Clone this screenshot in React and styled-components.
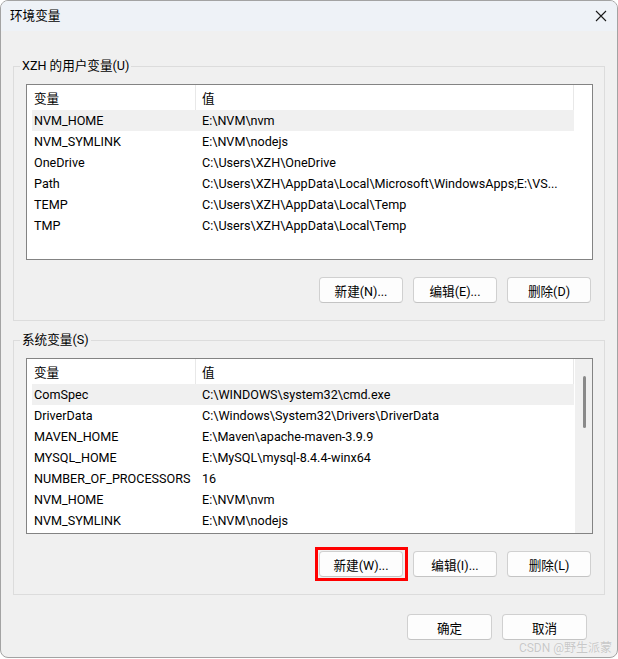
import React from "react";
import styled, { createGlobalStyle } from "styled-components";

const FONT = `Roboto, "Noto Sans CJK SC", sans-serif`;

const Global = createGlobalStyle`
  html, body { margin: 0; padding: 0; background: #ffffff; }
  body { font-family: ${FONT}; font-size: 12.6px; color: #000; }
  * { box-sizing: border-box; }
`;

const Window = styled.div`
  position: relative;
  width: 618px;
  height: 658px;
  border: 1px solid #a3a3a3;
  border-radius: 8px;
  background: #f0f0f0;
  overflow: hidden;
  display: flex;
  flex-direction: column;
`;

const TitleBar = styled.div`
  height: 30px;
  flex: none;
  background: #eef2f7;
  display: flex;
  align-items: center;
  justify-content: space-between;
  padding: 0 10px 0 9px;
`;

const Title = styled.span`
  font-size: 12.6px;
  line-height: 16px;
`;

const Close = styled.span`
  display: flex;
  width: 12px;
  height: 12px;
`;

const Group = styled.fieldset`
  margin: ${(p) => p.$top}px 12px 0 12px;
  padding: 10px 11px 17px 12px;
  border: 1px solid #dcdcdc;
  min-width: 0;
`;

const Legend = styled.legend`
  margin-left: -6px;
  padding: 0 2px;
  font-size: 12.6px;
  line-height: 16px;
`;

const List = styled.div`
  height: 176px;
  border: 1px solid #838383;
  background: #ffffff;
  display: flex;
`;

const ListBody = styled.div`
  flex: 1;
  padding-left: 5px;
  display: flex;
  flex-direction: column;
  min-width: 0;
`;

const Gutter = styled.div`
  width: 18px;
  flex: none;
  background: ${(p) => (p.$scroll ? "#f0f0f0" : "#ffffff")};
  border-left: 1px solid #ffffff;
  display: flex;
  justify-content: center;
  padding-top: 17px;
`;

const Thumb = styled.div`
  width: 3px;
  height: 52px;
  margin-left: 1px;
  border-radius: 2px;
  background: #8a8a8a;
`;

const HeaderRow = styled.div`
  height: 25px;
  display: flex;
  align-items: center;
  border-right: 1px solid #e8e8e8;
`;

const HeaderCell = styled.div`
  height: 100%;
  display: flex;
  align-items: center;
  width: ${(p) => (p.$first ? "164px" : "auto")};
  flex: ${(p) => (p.$first ? "none" : "1")};
  padding-left: ${(p) => (p.$first ? "2px" : "6px")};
  border-right: ${(p) => (p.$first ? "1px solid #e8e8e8" : "none")};
`;

const Row = styled.div`
  height: 21px;
  display: flex;
  align-items: center;
  background: ${(p) => (p.$active ? "#f0f0f0" : "transparent")};
  white-space: nowrap;
`;

const Cell = styled.div`
  width: ${(p) => (p.$first ? "164px" : "auto")};
  flex: ${(p) => (p.$first ? "none" : "1")};
  padding-left: ${(p) => (p.$first ? "2px" : "6px")};
  overflow: hidden;
  white-space: nowrap;
`;

const ButtonRow = styled.div`
  display: flex;
  justify-content: flex-end;
  gap: 10px;
  margin-top: 17px;
  padding-right: ${(p) => p.$right}px;
`;

const Button = styled.button`
  width: ${(p) => p.$w || 84}px;
  height: 26px;
  background: #fdfdfd;
  border: 1px solid #d0d0d0;
  border-bottom-color: #c4c4c4;
  border-radius: 4px;
  font-family: ${FONT};
  font-size: 12.6px;
  color: #000;
  padding: 0;
  display: flex;
  align-items: center;
  justify-content: center;
`;

const Highlight = styled.span`
  display: inline-flex;
  margin: -4px -5px -4px -4px;
  padding: 1px 2px 1px 1px;
  border: 3px solid #ff0000;
`;

const Footer = styled.div`
  display: flex;
  justify-content: flex-end;
  gap: 10px;
  margin-top: 19px;
  padding-right: 30px;
`;

const Watermark = styled.span`
  position: absolute;
  right: 5px;
  bottom: 2px;
  font-size: 12px;
  color: #c8c8c8;
  text-shadow: 0 0 1px #ffffff;
`;

const userVars = [
  ["NVM_HOME", "E:\\NVM\\nvm"],
  ["NVM_SYMLINK", "E:\\NVM\\nodejs"],
  ["OneDrive", "C:\\Users\\XZH\\OneDrive"],
  ["Path", "C:\\Users\\XZH\\AppData\\Local\\Microsoft\\WindowsApps;E:\\VS..."],
  ["TEMP", "C:\\Users\\XZH\\AppData\\Local\\Temp"],
  ["TMP", "C:\\Users\\XZH\\AppData\\Local\\Temp"],
];

const sysVars = [
  ["ComSpec", "C:\\WINDOWS\\system32\\cmd.exe"],
  ["DriverData", "C:\\Windows\\System32\\Drivers\\DriverData"],
  ["MAVEN_HOME", "E:\\Maven\\apache-maven-3.9.9"],
  ["MYSQL_HOME", "E:\\MySQL\\mysql-8.4.4-winx64"],
  ["NUMBER_OF_PROCESSORS", "16"],
  ["NVM_HOME", "E:\\NVM\\nvm"],
  ["NVM_SYMLINK", "E:\\NVM\\nodejs"],
];

function VarList({ rows, scroll }) {
  return (
    <List>
      <ListBody>
        <HeaderRow>
          <HeaderCell $first>变量</HeaderCell>
          <HeaderCell>值</HeaderCell>
        </HeaderRow>
        {rows.map(([k, v], i) => (
          <Row key={k} $active={i === 0}>
            <Cell $first>{k}</Cell>
            <Cell>{v}</Cell>
          </Row>
        ))}
      </ListBody>
      <Gutter $scroll={scroll}>{scroll && <Thumb />}</Gutter>
    </List>
  );
}

export default function App() {
  return (
    <>
      <Global />
      <Window>
        <TitleBar>
          <Title>环境变量</Title>
          <Close>
            <svg width="12" height="12" viewBox="0 0 12 12">
              <path d="M1 1 L11 11 M11 1 L1 11" stroke="#1a1a1a" strokeWidth="1.1" fill="none" />
            </svg>
          </Close>
        </TitleBar>

        <Group $top={27}>
          <Legend>XZH 的用户变量(U)</Legend>
          <VarList rows={userVars} />
          <ButtonRow $right={2}>
            <Button>新建(N)...</Button>
            <Button>编辑(E)...</Button>
            <Button>删除(D)</Button>
          </ButtonRow>
        </Group>

        <Group $top={11}>
          <Legend>系统变量(S)</Legend>
          <VarList rows={sysVars} scroll />
          <ButtonRow $right={2}>
            <Highlight>
              <Button>新建(W)...</Button>
            </Highlight>
            <Button>编辑(I)...</Button>
            <Button>删除(L)</Button>
          </ButtonRow>
        </Group>

        <Footer>
          <Button $w={85}>确定</Button>
          <Button $w={85}>取消</Button>
        </Footer>
        <Watermark>CSDN @野生派蒙</Watermark>
      </Window>
    </>
  );
}
